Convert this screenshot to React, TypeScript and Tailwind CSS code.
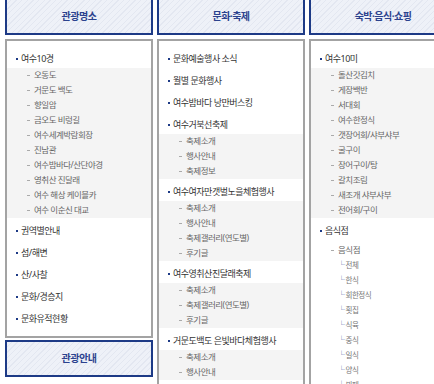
type Child = { label: string; children?: string[] };
type Group = { label: string; items?: Child[] };
type Column = { title: string; groups: Group[]; footer?: string };

const sub = (labels: string[]): Child[] => labels.map((label) => ({ label }));

const columns: Column[] = [
  {
    title: "관광명소",
    groups: [
      {
        label: "여수10경",
        items: sub([
          "오동도",
          "거문도 백도",
          "향일암",
          "금오도 비렁길",
          "여수세계박람회장",
          "진남관",
          "여수밤바다/산단야경",
          "영취산 진달래",
          "여수 해상 케이블카",
          "여수 이순신 대교",
        ]),
      },
      { label: "권역별안내" },
      { label: "섬/해변" },
      { label: "산/사찰" },
      { label: "문화/경승지" },
      { label: "문화유적현황" },
    ],
    footer: "관광안내",
  },
  {
    title: "문화·축제",
    groups: [
      { label: "문화예술행사 소식" },
      { label: "월별 문화행사" },
      { label: "여수밤바다 낭만버스킹" },
      { label: "여수거북선축제", items: sub(["축제소개", "행사안내", "축제정보"]) },
      {
        label: "여수여자만갯벌노을체험행사",
        items: sub(["축제소개", "행사안내", "축제갤러리(연도별)", "후기글"]),
      },
      {
        label: "여수영취산진달래축제",
        items: sub(["축제소개", "축제갤러리(연도별)", "후기글"]),
      },
      {
        label: "거문도백도 은빛바다체험행사",
        items: sub(["축제소개", "행사안내"]),
      },
    ],
  },
  {
    title: "숙박·음식·쇼핑",
    groups: [
      {
        label: "여수10미",
        items: sub([
          "돌산갓김치",
          "게장백반",
          "서대회",
          "여수한정식",
          "갯장어회/샤부샤부",
          "굴구이",
          "장어구이/탕",
          "갈치조림",
          "새조개 샤부샤부",
          "전어회/구이",
        ]),
      },
      {
        label: "음식점",
        items: [
          {
            label: "음식점",
            children: ["전체", "한식", "회한정식", "횟집", "식육", "중식", "일식", "양식", "뷔페"],
          },
        ],
      },
    ],
  },
];

function HeaderBox({ title, className = "" }: { title: string; className?: string }) {
  return (
    <div
      className={`flex items-center justify-center border-2 border-[#1d3a86] bg-[repeating-linear-gradient(135deg,#eef1f8_0px,#eef1f8_3px,#e3e7f1_3px,#e3e7f1_4px)] text-[10px] font-semibold tracking-[-0.5px] text-[#2b428e] ${className}`}
    >
      {title}
    </div>
  );
}

function MenuGroup({ group }: { group: Group }) {
  const nested = group.items?.some((item) => item.children);

  return (
    <div>
      <div className="flex h-[22px] items-center pl-[9px] pt-[3px] text-[9px] tracking-[-0.5px] text-[#333]">
        <span className="mr-[3px] h-[2px] w-[2px] bg-[#1d3a86]" />
        {group.label}
      </div>
      {group.items ? (
        <ul className={nested ? "bg-white pt-[3px]" : "bg-[#f4f4f4]"}>
          {group.items.map((item) => (
            <li key={item.label}>
              <div className="flex h-[15px] items-center pl-[20px] text-[8.5px] tracking-[-0.5px] text-[#666]">
                <span className="mr-[4px] h-px w-[3px] bg-[#aaa]" />
                {item.label}
              </div>
              {item.children?.map((child) => (
                <div
                  key={child}
                  className="flex h-[15px] items-center pl-[27px] text-[7.5px] tracking-[-0.5px] text-[#777]"
                >
                  <span className="mr-[1px] text-[7px] text-[#3d56a6]">└</span>
                  {child}
                </div>
              ))}
            </li>
          ))}
        </ul>
      ) : null}
    </div>
  );
}

export default function App() {
  return (
    <div className="h-[384px] w-[434px] overflow-hidden bg-white font-['Noto_Sans','Noto_Sans_CJK_KR',sans-serif]">
      <div className="-mt-[3px] flex gap-[4px] pl-[5px]">
        {columns.map((column) => (
          <div key={column.title} className="flex w-[148px] shrink-0 flex-col">
            <HeaderBox title={column.title} className="h-[38px]" />
            <div className="mt-[4px] border-2 border-[#a3a3a3] pb-[8px] pt-[5px]">
              {column.groups.map((group) => (
                <MenuGroup key={group.label} group={group} />
              ))}
            </div>
            {column.footer ? (
              <HeaderBox title={column.footer} className="mt-[2px] h-[37px]" />
            ) : null}
          </div>
        ))}
      </div>
    </div>
  );
}
